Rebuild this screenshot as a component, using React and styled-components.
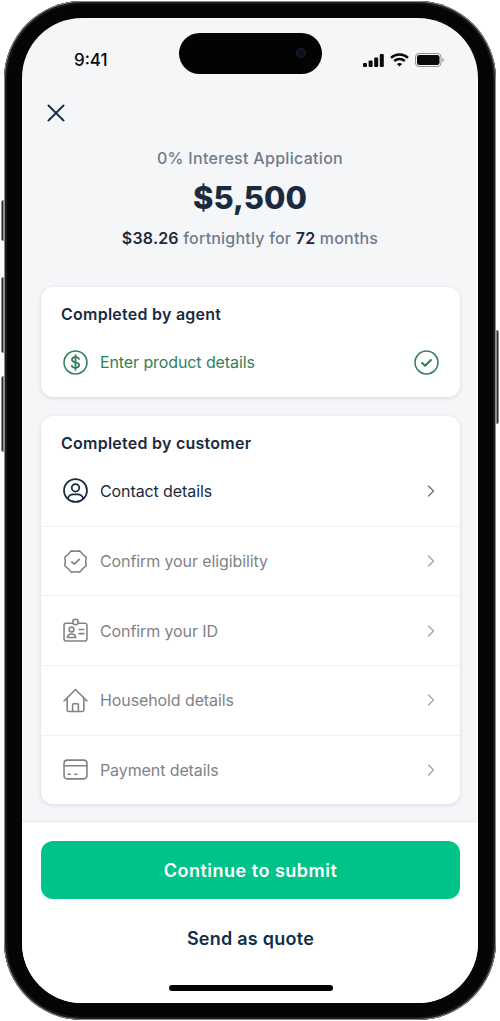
import React from "react";
import styled, { createGlobalStyle } from "styled-components";
import { ChevronRight, X } from "lucide-react";

const GlobalStyle = createGlobalStyle`
  html, body {
    margin: 0;
    padding: 0;
    background: #fff;
  }
  * {
    box-sizing: border-box;
  }
`;

const font = `Inter, "Noto Sans", sans-serif`;

const Page = styled.div`
  width: 500px;
  height: 1021px;
  padding: 1px 4px 1px 4px;
  overflow: hidden;
  font-family: ${font};
`;

const Phone = styled.div`
  position: relative;
  width: 492px;
  height: 1019px;
  padding: 17px 18px;
  border-radius: 78px;
  background: #050505;
  box-shadow: inset 0 0 0 1px #8c8c8e, inset 0 0 0 3px #1b1b1c;
`;

const SideButton = styled.span`
  position: absolute;
  width: 3px;
  top: ${(p) => p.$top}px;
  height: ${(p) => p.$height}px;
  ${(p) => (p.$right ? "right: -3px;" : "left: -3px;")}
  background: #2a2a2c;
  border: 1px solid #8f8f91;
  border-radius: ${(p) => (p.$right ? "0 2px 2px 0" : "2px 0 0 2px")};
`;

const Screen = styled.div`
  position: relative;
  height: 985px;
  border-radius: 60px;
  background: #f4f6f8;
  overflow: hidden;
  display: flex;
  flex-direction: column;
`;

const StatusBar = styled.div`
  height: 56px;
  flex: none;
  margin-top: 15px;
  padding: 0 34px 0 52px;
  display: flex;
  align-items: center;
  justify-content: space-between;
`;

const Time = styled.span`
  font-size: 17px;
  font-weight: 500;
  color: #0a0a0a;
  margin-top: -2px;
`;

const Island = styled.div`
  position: absolute;
  top: 15px;
  left: 157px;
  width: 143px;
  height: 41px;
  border-radius: 21px;
  background: #030303;
`;

const Lens = styled.span`
  position: absolute;
  top: 15px;
  right: 16px;
  width: 10px;
  height: 10px;
  border-radius: 50%;
  background: #0a0f1a;
  box-shadow: inset 0 0 0 1.5px #141c2c;
`;

const StatusIcons = styled.div`
  display: flex;
  align-items: center;
  gap: 6px;
  margin-top: -2px;
`;

const CloseButton = styled.button`
  align-self: flex-start;
  margin: 9px 0 0 19px;
  padding: 0;
  width: 30px;
  height: 30px;
  border: 0;
  background: none;
  color: #1c3148;
  display: flex;
`;

const Summary = styled.div`
  margin-top: 18px;
  text-align: center;
  flex: none;
`;

const Eyebrow = styled.div`
  font-size: 16px;
  line-height: 24px;
  font-weight: 500;
  color: #717b8c;
  letter-spacing: 0.3px;
`;

const Amount = styled.div`
  margin-top: 8px;
  font-size: 31px;
  line-height: 40px;
  font-weight: 800;
  color: #1a2b3f;
`;

const Terms = styled.div`
  margin-top: 8px;
  font-size: 16px;
  line-height: 24px;
  font-weight: 500;
  color: #717b8c;
  letter-spacing: 0.2px;

  b {
    font-weight: 600;
    color: #1a2b3f;
  }
`;

const Card = styled.section`
  margin: ${(p) => p.$top}px 18px 0 19px;
  background: #fff;
  border-radius: 12px;
  box-shadow: 0 1px 4px rgba(30, 45, 70, 0.14);
  padding-top: 16px;
  flex: none;
`;

const CardTitle = styled.h2`
  margin: 0;
  padding: 0 20px;
  font-size: 16px;
  line-height: 22px;
  font-weight: 600;
  color: #1a2b3f;
  letter-spacing: 0.25px;
`;

const Row = styled.div`
  height: ${(p) => p.$height}px;
  padding: ${(p) => p.$pad}px 21px 0 22px;
  display: flex;
  align-items: center;
  gap: 12px;
  color: ${(p) => p.$color};
  border-bottom: ${(p) => (p.$divider ? "1px solid #f0f1f3" : "0")};
`;

const RowLabel = styled.span`
  flex: 1;
  font-size: 16px;
  font-weight: 400;
  letter-spacing: -0.1px;
`;

const ChevronIcon = styled(ChevronRight)`
  color: ${(p) => (p.$muted ? "#a3a7aa" : "#6e7478")};
  margin-right: -2px;
`;

const Footer = styled.div`
  margin-top: 17px;
  flex: 1;
  background: #fff;
  border-top: 1px solid #e8eaed;
  padding: 19px 18px 0 19px;
  display: flex;
  flex-direction: column;
  align-items: stretch;
`;

const PrimaryButton = styled.button`
  height: 58px;
  border: 0;
  border-radius: 12px;
  background: #00c389;
  color: #fff;
  font-family: ${font};
  font-size: 18px;
  font-weight: 600;
  letter-spacing: 0.5px;
`;

const SecondaryButton = styled.button`
  margin-top: 24px;
  height: 30px;
  border: 0;
  background: none;
  color: #0f3049;
  font-family: ${font};
  font-size: 18px;
  font-weight: 600;
  letter-spacing: 0.25px;
`;

const HomeBar = styled.div`
  position: absolute;
  left: 147px;
  bottom: 12px;
  width: 164px;
  height: 6px;
  border-radius: 3px;
  background: #030303;
`;

const iconProps = {
  width: 25,
  height: 25,
  viewBox: "0 0 24 24",
  fill: "none",
  stroke: "currentColor",
  strokeWidth: 1.5,
  strokeLinecap: "round",
  strokeLinejoin: "round",
};

const DollarIcon = () => (
  <svg {...iconProps}>
    <circle cx="12" cy="12" r="11" />
    <path d="M15.400 8.600c-.5-1.100-1.700-1.800-3.400-1.800-2 0-3.400 1-3.400 2.500 0 3.400 6.900 1.800 6.900 5.200 0 1.500-1.500 2.600-3.500 2.600-1.800 0-3.100-.8-3.600-2" strokeWidth="1.7" />
    <path d="M12 5v14" strokeWidth="1.7" />
  </svg>
);

const DoneIcon = () => (
  <svg {...iconProps}>
    <circle cx="12" cy="12" r="11" />
    <path d="M7.800 12.400l2.900 2.800 5.500-5.600" strokeWidth="2" />
  </svg>
);

const UserIcon = () => (
  <svg {...iconProps} strokeWidth="1.7">
    <circle cx="12" cy="12" r="11" />
    <circle cx="12" cy="9.400" r="3.600" />
    <path d="M4.600 19.600c.8-2.700 3.100-3.900 5.400-3.900h4c2.300 0 4.600 1.200 5.400 3.900" />
  </svg>
);

const BadgeIcon = () => (
  <svg {...iconProps}>
    <path d="M7.800 1.800Q12 2.600 16.200 1.800Q18.700 5.300 22.200 7.800Q21.400 12 22.200 16.200Q18.700 18.700 16.200 22.200Q12 21.400 7.800 22.200Q5.300 18.700 1.800 16.200Q2.600 12 1.800 7.800Q5.300 5.300 7.800 1.800Z" />
    <path d="M8.400 12.300l2.500 2.300 4.700-4.700" strokeWidth="1.600" />
  </svg>
);

const IdIcon = () => (
  <svg {...iconProps}>
    <path d="M9.200 5H2.800A1.800 1.800 0 0 0 1 6.800v13.400A1.800 1.800 0 0 0 2.800 22h18.400a1.800 1.800 0 0 0 1.800-1.800V6.800A1.800 1.800 0 0 0 21.200 5h-6.400" />
    <circle cx="12" cy="3.800" r="2.600" />
    <circle cx="8.200" cy="11" r="2.300" />
    <path d="M4.200 18.800c.3-2.400 1.900-3.500 4-3.500s3.700 1.100 4 3.500zM15.500 11h4.500M15.500 15h4.500" />
  </svg>
);

const HomeIcon = () => (
  <svg {...iconProps}>
    <path d="M1 12.500L12 1.400l11 11.100" />
    <path d="M4 9.800v11.400a1.300 1.300 0 0 0 1.300 1.300h13.400a1.300 1.300 0 0 0 1.300-1.300V9.800" />
    <path d="M9.200 22.500v-6.300a1 1 0 0 1 1-1h3.600a1 1 0 0 1 1 1v6.300" />
  </svg>
);

const CardIcon = () => (
  <svg {...iconProps}>
    <rect x="1" y="3" width="22" height="18" rx="3.200" />
    <path d="M1 8.400h22M5 16.600h2M11.200 16.600h2" />
  </svg>
);

const customerSteps = [
  { label: "Contact details", Icon: UserIcon, active: true },
  { label: "Confirm your eligibility", Icon: BadgeIcon },
  { label: "Confirm your ID", Icon: IdIcon },
  { label: "Household details", Icon: HomeIcon },
  { label: "Payment details", Icon: CardIcon },
];

const rowHeights = [73, 69, 70, 69.5, 68.5];

function App() {
  return (
    <Page>
      <GlobalStyle />
      <Phone>
        <SideButton $top={199} $height={41} />
        <SideButton $top={276} $height={76} />
        <SideButton $top={375} $height={76} />
        <SideButton $right $top={329} $height={94} />
        <Screen>
          <Island>
            <Lens />
          </Island>
          <StatusBar>
            <Time>9:41</Time>
            <StatusIcons>
              <svg width="21" height="13" viewBox="0 0 21 13" fill="#0a0a0a">
                <rect x="0" y="9" width="4" height="4" rx="1" />
                <rect x="5.600" y="6.400" width="4" height="6.600" rx="1" />
                <rect x="11.200" y="3.400" width="4" height="9.600" rx="1" />
                <rect x="16.800" y="0" width="4" height="13" rx="1" />
              </svg>
              <svg width="19" height="14" viewBox="0 0 19 14" fill="none" stroke="#0a0a0a" strokeWidth="2.400">
                <path d="M1 4.800c4.800-4.400 12.200-4.400 17 0" />
                <path d="M4.200 8c3-2.700 7.600-2.700 10.600 0" />
                <path d="M9.500 13.600L6.900 10.900c1.500-1.200 3.700-1.200 5.200 0z" fill="#0a0a0a" stroke="none" />
              </svg>
              <svg width="29" height="14" viewBox="0 0 29 14" fill="none">
                <rect x="0.500" y="0.500" width="25.500" height="13" rx="3.500" stroke="#8f8f8f" />
                <rect x="2" y="2" width="22.500" height="10" rx="2.200" fill="#0a0a0a" />
                <path d="M27.500 5v4c.8-.3 1.300-1.100 1.300-2s-.5-1.700-1.300-2z" fill="#8f8f8f" />
              </svg>
            </StatusIcons>
          </StatusBar>
          <CloseButton aria-label="Close">
            <X size={30} strokeWidth={1.6} />
          </CloseButton>
          <Summary>
            <Eyebrow>0% Interest Application</Eyebrow>
            <Amount>$5,500</Amount>
            <Terms>
              <b>$38.26</b> fortnightly for <b>72</b> months
            </Terms>
          </Summary>
          <Card $top={37}>
            <CardTitle>Completed by agent</CardTitle>
            <Row $height={72} $pad={2} $color="#2f8158">
              <DollarIcon />
              <RowLabel>Enter product details</RowLabel>
              <DoneIcon />
            </Row>
          </Card>
          <Card $top={19}>
            <CardTitle>Completed by customer</CardTitle>
            {customerSteps.map(({ label, Icon, active }, i) => (
              <Row
                key={label}
                $height={rowHeights[i]}
                $pad={i === 0 ? 1 : 0}
                $color={active ? "#1a2b3f" : "#7f8386"}
                $divider={i < customerSteps.length - 1}
              >
                <Icon />
                <RowLabel>{label}</RowLabel>
                <ChevronIcon size={20} strokeWidth={1.6} $muted={!active} />
              </Row>
            ))}
          </Card>
          <Footer>
            <PrimaryButton>Continue to submit</PrimaryButton>
            <SecondaryButton>Send as quote</SecondaryButton>
          </Footer>
          <HomeBar />
        </Screen>
      </Phone>
    </Page>
  );
}

export default App;
